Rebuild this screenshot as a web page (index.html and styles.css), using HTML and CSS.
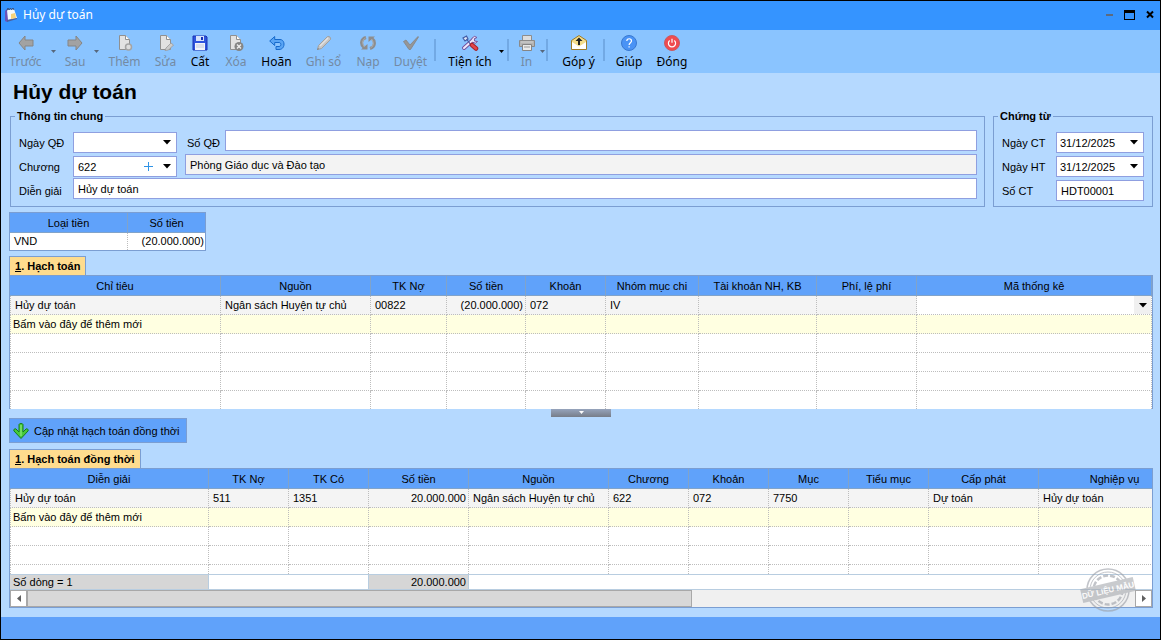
FILE: index.html
```html
<!DOCTYPE html>
<html lang="vi">
<head>
<meta charset="utf-8">
<meta name="viewport" content="width=device-width, initial-scale=1">
<title>Hủy dự toán</title>
<link rel="stylesheet" href="styles.css">
</head>
<body>
<div class="window">
  <header class="titlebar">
    <svg class="app-icon" width="14" height="16" viewBox="0 0 14 16" aria-hidden="true">
      <path d="M1 4l2-2 2 11-2 2-2-1z" fill="#6a52b8"/>
      <path d="M3 3l7-1 3 9-9 2z" fill="#f4f8fc"/>
      <path d="M7 7l4-1 1 5-5 1z" fill="#f5d27a"/>
      <path d="M3 13l10-2v1L3 15z" fill="#4a5f9e"/>
      <path d="M3 3.500l1-2.500 1 2 1.500-2 1 2 1.500-2 1 2" stroke="#37507d" fill="none"/>
    </svg>
    <span class="caption">Hủy dự toán</span>
    <button class="win-btn" aria-label="Thu nhỏ"><svg width="7" height="13" viewBox="0 0 7 13"><path d="M0 6h7v2H0z" fill="#5c6b80"/></svg></button>
    <button class="win-btn" aria-label="Phóng to"><svg width="11" height="11" viewBox="0 0 11 11"><path d="M0 1h11v10H0zM1 4v6h9V4z" fill="#000" fill-rule="evenodd"/></svg></button>
    <button class="win-btn" aria-label="Đóng cửa sổ"><svg width="8" height="11" viewBox="0 0 8 11"><path d="M1 2.500l6 6M7 2.500l-6 6" stroke="#000" stroke-width="2"/></svg></button>
  </header>

  <nav class="toolbar" aria-label="Thanh công cụ">
    <button class="tool" disabled>
      <svg width="16" height="16" viewBox="0 0 16 16"><path d="M1 8l6-7v4h8v6H7v4z" fill="#a2a2a2" stroke="#858585"/></svg>Trước</button>
    <button class="drop" disabled aria-label="Danh sách trước"><svg width="5" height="3" viewBox="0 0 5 3"><path d="M0 0h5L2.500 3z"/></svg></button>
    <button class="tool" disabled>
      <svg width="16" height="16" viewBox="0 0 16 16"><path d="M15 8L9 1v4H1v6h8v4z" fill="#a2a2a2" stroke="#858585"/></svg>Sau</button>
    <button class="drop" disabled aria-label="Danh sách sau"><svg width="5" height="3" viewBox="0 0 5 3"><path d="M0 0h5L2.500 3z"/></svg></button>
    <button class="tool" disabled>
      <svg width="16" height="16" viewBox="0 0 16 16"><path d="M2.500.5h6l4 4v10h-10z" fill="#e2e2e2" stroke="#909090"/><path d="M8.500.5v4h4" fill="#fff" stroke="#909090"/><circle cx="11.500" cy="12" r="3" fill="#dcdcdc" stroke="#a4a4a4" stroke-width="1.500"/></svg>Thêm</button>
    <button class="tool" disabled>
      <svg width="16" height="16" viewBox="0 0 16 16"><path d="M2.500.5h6l4 4v10h-10z" fill="#e2e2e2" stroke="#909090"/><path d="M8.500.5v4h4" fill="#fff" stroke="#909090"/><path d="M8 13l5-5 2.500 2-5 5L7 15.500z" fill="#ccc" stroke="#999" stroke-width=".8"/></svg>Sửa</button>
    <button class="tool">
      <svg width="16" height="16" viewBox="0 0 16 16"><path d="M1 1h13l1 1v13H1z" fill="#2f55dd" stroke="#1a33b4"/><path d="M4 1h8v5H4z" fill="#d6e2fb"/><path d="M9 2h2v3H9z" fill="#1a33b4"/><path d="M3 8h10v7H3z" fill="#f1f4fb"/><path d="M4 10h8M4 12h8" stroke="#c3cbdc"/></svg>Cất</button>
    <button class="tool" disabled>
      <svg width="16" height="16" viewBox="0 0 16 16"><path d="M2.500.5h6l4 4v10h-10z" fill="#e2e2e2" stroke="#909090"/><path d="M8.500.5v4h4" fill="#fff" stroke="#909090"/><circle cx="11" cy="11.500" r="4.500" fill="#858585"/><path d="M9 9.500l4 4M13 9.500l-4 4" stroke="#eee" stroke-width="1.400"/></svg>Xóa</button>
    <button class="tool">
      <svg width="16" height="16" viewBox="0 0 16 16"><path d="M.7 6l5-4.500v3H11c5.500 0 5.500 10-1 10H7v-3h3c2.500 0 2.500-4 0-4H5.700v3z" fill="#5aa5f4" stroke="#1669cb"/></svg>Hoãn</button>
    <button class="tool" disabled>
      <svg width="16" height="16" viewBox="0 0 16 16"><path d="M1.500 14.500l1-4 9-9c2-.5 3.500 1 3 3l-9 9z" fill="#c6c6c6" stroke="#a0a0a0"/><path d="M4 11l8-8" stroke="#e2e2e2" stroke-width="1.500"/><path d="M1 15l1-2 1 1z" fill="#777"/></svg>Ghi sổ</button>
    <button class="tool" disabled>
      <svg width="16" height="16" viewBox="0 0 16 16"><path d="M6 2.500C.5 4 .5 10 4 12.500M10 13.500c5.500-1.500 5.500-7.500 2-10" stroke="#8d8d8d" stroke-width="3" fill="none"/><path d="M1 14.500h6.500V9zM15 1.500H8.500V7z" fill="#8d8d8d"/><path d="M5.500 3C2 5 2 9 4.500 12M10.500 13c3.500-2 3.500-6 1-9" stroke="#b0b0b0" fill="none"/></svg>Nạp</button>
    <button class="tool" disabled>
      <svg width="16" height="16" viewBox="0 0 16 16"><path d="M.5 6.500L3 5l4 5 8-8.500.5.500-8 12.500H6z" fill="#969696" stroke="#848484" stroke-width=".8"/></svg>Duyệt</button>
    <span class="sep"></span>
    <button class="tool">
      <svg width="18" height="16" viewBox="0 0 18 16"><path d="M3 13L12 5" stroke="#72509e" stroke-width="4" stroke-linecap="round"/><path d="M16 2.500a3.200 3.200 0 1 0 .5 4L13.500 6l-.5-2z" fill="#ece6f8" stroke="#72509e"/><path d="M3 13L12 5" stroke="#efe8fb" stroke-width="2" stroke-linecap="round"/><path d="M2 3l3.500-2 1.500 3-3 2zM5.500 4L10 10" stroke="#425ba4" stroke-width="1.200" fill="#dfe6f8"/><path d="M11 10l4 3.500" stroke="#a81f28" stroke-width="4.500" stroke-linecap="round"/><path d="M11 10l4 3.500" stroke="#e2454a" stroke-width="2.500" stroke-linecap="round"/></svg>Tiện ích</button>
    <button class="drop" aria-label="Danh sách tiện ích"><svg width="5" height="3" viewBox="0 0 5 3"><path d="M0 0h5L2.500 3z"/></svg></button>
    <span class="sep"></span>
    <button class="tool" disabled>
      <svg width="18" height="16" viewBox="0 0 18 16"><path d="M4.500.5h9v6h-9z" fill="#ddd" stroke="#8d8d8d"/><path d="M1.500 5.500h15v6h-15z" fill="#b4b4b4" stroke="#8a8a8a"/><path d="M3 7h12" stroke="#d0d0d0"/><path d="M4.500 9.500h9v6h-9z" fill="#e9e9e9" stroke="#858585"/><path d="M6 12h6" stroke="#999"/></svg>In</button>
    <button class="drop" disabled aria-label="Danh sách in"><svg width="5" height="3" viewBox="0 0 5 3"><path d="M0 0h5L2.500 3z"/></svg></button>
    <span class="sep"></span>
    <button class="tool">
      <svg width="16" height="16" viewBox="0 0 16 16"><path d="M.5 5.500l7.500-5 7.500 5v9H.5z" fill="#f4dd8a" stroke="#a07c25"/><path d="M1 7l7 4.500L15 7v7H1z" fill="#fff"/><path d="M8 2.500L4.500 6H7v4h2V6h2.500z" fill="#222"/></svg>Góp ý</button>
    <span class="sep"></span>
    <button class="tool">
      <svg width="16" height="16" viewBox="0 0 16 16"><circle cx="8" cy="8" r="7.500" fill="#4a93f5" stroke="#3978d0"/><path d="M5.800 6c0-3 4.700-3 4.700 0 0 1.700-2.400 1.700-2.400 4M8.100 11.200v1.400" stroke="#fff" stroke-width="1.200" fill="none"/></svg>Giúp</button>
    <button class="tool">
      <svg width="16" height="16" viewBox="0 0 16 16"><circle cx="8" cy="8" r="7.500" fill="#ef4b50" stroke="#c9595f"/><path d="M5.700 5.500a3.600 3.600 0 1 0 4.600 0M8 3.800v4" stroke="#fff" stroke-width="1.200" fill="none"/></svg>Đóng</button>
  </nav>

  <main class="content">
    <h1>Hủy dự toán</h1>

    <form class="forms">
      <fieldset class="group general">
        <legend>Thông tin chung</legend>
        <div class="row">
          <label for="ngay-qd">Ngày QĐ</label>
          <span class="combo"><select id="ngay-qd"><option></option></select><svg class="caret" width="8" height="5" viewBox="0 0 8 5"><path d="M0 0h8L4 4.500z"/></svg></span>
          <label for="so-qd" class="second">Số QĐ</label>
          <input id="so-qd" type="text">
        </div>
        <div class="row">
          <label for="chuong">Chương</label>
          <span class="combo"><select id="chuong"><option>622</option></select><button type="button" class="add" aria-label="Thêm chương"><svg width="9" height="9" viewBox="0 0 9 9"><path d="M4 0h1v4h4v1H5v4H4V5H0V4h4z" fill="#2f93e6"/></svg></button><svg class="caret" width="8" height="5" viewBox="0 0 8 5"><path d="M0 0h8L4 4.500z"/></svg></span>
          <input class="name" type="text" readonly aria-label="Tên chương" value="Phòng Giáo dục và Đào tạo">
        </div>
        <div class="row">
          <label for="dien-giai">Diễn giải</label>
          <input id="dien-giai" type="text" value="Hủy dự toán">
        </div>
      </fieldset>

      <fieldset class="group voucher">
        <legend>Chứng từ</legend>
        <div class="row">
          <label for="ngay-ct">Ngày CT</label>
          <span class="combo"><select id="ngay-ct"><option>31/12/2025</option></select><svg class="caret" width="8" height="5" viewBox="0 0 8 5"><path d="M0 0h8L4 4.500z"/></svg></span>
        </div>
        <div class="row">
          <label for="ngay-ht">Ngày HT</label>
          <span class="combo"><select id="ngay-ht"><option>31/12/2025</option></select><svg class="caret" width="8" height="5" viewBox="0 0 8 5"><path d="M0 0h8L4 4.500z"/></svg></span>
        </div>
        <div class="row">
          <label for="so-ct">Số CT</label>
          <input id="so-ct" type="text" value="HDT00001">
        </div>
      </fieldset>
    </form>

    <table class="currency">
      <thead><tr><th>Loại tiền</th><th>Số tiền</th></tr></thead>
      <tbody><tr><td>VND</td><td class="num">(20.000.000)</td></tr></tbody>
    </table>

    <button class="tab"><span><u>1</u>. Hạch toán</span></button>
    <div class="sheet">
      <table class="ledger">
        <colgroup><col class="w211"><col class="w150"><col class="w76"><col class="w79"><col class="w80"><col class="w93"><col class="w118"><col class="w100"><col></colgroup>
        <thead><tr><th>Chỉ tiêu</th><th>Nguồn</th><th>TK Nợ</th><th>Số tiền</th><th>Khoản</th><th>Nhóm mục chi</th><th>Tài khoản NH, KB</th><th>Phí, lệ phí</th><th>Mã thống kê</th></tr></thead>
        <tbody>
          <tr class="filled"><td>Hủy dự toán</td><td>Ngân sách Huyện tự chủ</td><td>00822</td><td class="num">(20.000.000)</td><td>072</td><td>IV</td><td></td><td></td><td class="editing"><span class="combo"><select aria-label="Mã thống kê"><option></option></select><svg class="caret" width="8" height="5" viewBox="0 0 8 5"><path d="M0 0h8L4 4.500z"/></svg></span></td></tr>
          <tr class="new"><td>Bấm vào đây để thêm mới</td><td></td><td></td><td></td><td></td><td></td><td></td><td></td><td></td></tr>
          <tr><td></td><td></td><td></td><td></td><td></td><td></td><td></td><td></td><td></td></tr>
          <tr><td></td><td></td><td></td><td></td><td></td><td></td><td></td><td></td><td></td></tr>
          <tr><td></td><td></td><td></td><td></td><td></td><td></td><td></td><td></td><td></td></tr>
          <tr class="last"><td></td><td></td><td></td><td></td><td></td><td></td><td></td><td></td><td></td></tr>
        </tbody>
      </table>
    </div>
    <button class="splitter" aria-label="Thu gọn"><svg width="5" height="3" viewBox="0 0 5 3"><path d="M0 0h5L2.500 3z" fill="#fff"/></svg></button>

    <button class="update">
      <svg width="16" height="16" viewBox="0 0 16 16"><path d="M6 1.500c0-1.300 4-1.300 4 0V9l3-3c1-1 3 .8 2 2L8 15.500 1 8c-1-1.200 1-3 2-2l3 3z" fill="#47c93c" stroke="#15801a"/><path d="M8 2v11" stroke="#9af08a"/></svg>
      <span>Cập nhật hạch toán đồng thời</span>
    </button>

    <button class="tab"><span><u>1</u>. Hạch toán đồng thời</span></button>
    <div class="sheet">
      <table class="ledger wide">
        <colgroup><col class="w199"><col class="w80"><col class="w80"><col class="w100"><col class="w140"><col class="w80"><col class="w80"><col class="w80"><col class="w80"><col class="w110"><col></colgroup>
        <thead><tr><th>Diễn giải</th><th>TK Nợ</th><th>TK Có</th><th>Số tiền</th><th>Nguồn</th><th>Chương</th><th>Khoản</th><th>Mục</th><th>Tiểu mục</th><th>Cấp phát</th><th>Nghiệp vụ</th></tr></thead>
        <tbody>
          <tr class="filled"><td>Hủy dự toán</td><td>511</td><td>1351</td><td class="num">20.000.000</td><td>Ngân sách Huyện tự chủ</td><td>622</td><td>072</td><td>7750</td><td></td><td>Dự toán</td><td>Hủy dự toán</td></tr>
          <tr class="new"><td>Bấm vào đây để thêm mới</td><td></td><td></td><td></td><td></td><td></td><td></td><td></td><td></td><td></td><td></td></tr>
          <tr><td></td><td></td><td></td><td></td><td></td><td></td><td></td><td></td><td></td><td></td><td></td></tr>
          <tr><td></td><td></td><td></td><td></td><td></td><td></td><td></td><td></td><td></td><td></td><td></td></tr>
          <tr class="cut"><td></td><td></td><td></td><td></td><td></td><td></td><td></td><td></td><td></td><td></td><td></td></tr>
        </tbody>
        <tfoot><tr><td class="sum">Số dòng = 1</td><td colspan="2"></td><td class="sum num">20.000.000</td><td colspan="7"></td></tr></tfoot>
      </table>
      <div class="scrollbar">
        <button aria-label="Cuộn trái"><svg width="4" height="7" viewBox="0 0 4 7"><path d="M4 0v7L0 3.500z"/></svg></button>
        <div class="track"><div class="thumb"></div></div>
        <button aria-label="Cuộn phải"><svg width="4" height="7" viewBox="0 0 4 7"><path d="M0 0v7l4-3.500z"/></svg></button>
      </div>
    </div>
    <svg class="stamp" width="58" height="46" viewBox="0 0 58 46">
      <g fill="none" stroke="#9a9ea6">
        <circle cx="29" cy="23" r="21" stroke-width="1.500"/>
        <circle cx="29" cy="23" r="18" stroke-width="1"/>
        <circle cx="29" cy="23" r="14.500" stroke-width="2.500" stroke-dasharray="5 2"/>
      </g>
      <g transform="rotate(-13 29 23)">
        <path d="M2 16h54v14H2z" fill="#a6a9af"/>
        <text x="29" y="26" text-anchor="middle" font-size="8" font-weight="700" fill="#fff">DỮ LIỆU MẪU</text>
      </g>
    </svg>
  </main>
  <footer class="statusbar"></footer>
</div>
</body>
</html>
```

FILE: styles.css
```css
* { box-sizing: border-box; }

:root {
  --line: #7b9ed2;
  --field-line: #8f9fe0;
  --header: #60a2fa;
  --page: #b5d9ff;
  --dots: #bdbdbd;
}

body {
  margin: 0;
  font: 11px/14px "Liberation Sans", Arial, sans-serif;
  color: #000;
}

button, input, select { font: inherit; color: inherit; margin: 0; }
button { padding: 0; border: 0; background: none; }
svg { display: block; flex: none; }

.window {
  display: flex;
  flex-direction: column;
  min-height: 100vh;
  border: 1px solid #000;
  background: var(--page);
}

/* Title bar */
.titlebar {
  display: flex;
  align-items: center;
  gap: 11px;
  height: 29px;
  padding: 0 6px 2px 3px;
  background: #3594ff;
}
.caption {
  flex: 1;
  margin-left: -6px;
  color: #fff;
  font: 12px/16px "Noto Sans", "Open Sans", sans-serif;
}

/* Toolbar */
.toolbar {
  display: grid;
  grid-template-columns:
    47px 8px 36px 7px 49px 33px 36px 36px 45px 49px 40px 45px
    10px 54px 9px 7px 27px 5px 10px 47px 5px 44px 42px;
  height: 43px;
  padding-left: 1px;
  background: #8ac4ff;
}
.tool {
  display: flex;
  flex-direction: column;
  align-items: center;
  gap: 3px;
  padding-top: 5px;
  white-space: nowrap;
  font: 12px/16px "Noto Sans", "Open Sans", sans-serif;
}
.tool:disabled { color: #748aa3; }
.drop {
  display: flex;
  justify-content: center;
  padding-top: 20px;
}
.drop:disabled { fill: #56677c; }
.sep {
  width: 2px;
  height: 22px;
  margin: 9px 1px 0;
  background: #72a9e4;
}

/* Content */
.content {
  position: relative;
  display: flex;
  flex-direction: column;
  padding: 0 7px 9px 8px;
}
h1 {
  margin: 0;
  padding: 7px 4px 5px;
  font-size: 21px;
  line-height: 24px;
}
.forms {
  display: flex;
  gap: 8px;
  margin-bottom: 5px;
}
.group {
  min-width: 0;
  margin: 0;
  padding: 7px 7px 4px 8px;
  border: 1px solid var(--line);
}
.general { flex: 1; margin-left: 1px; }
.voucher { flex: 0 0 160px; padding-right: 8px; }
legend {
  margin-left: -4px;
  padding: 0 2px;
  font-weight: 700;
}
.row {
  display: flex;
  align-items: flex-start;
  height: 24px;
}
.row label {
  flex: 0 0 54px;
  padding-top: 6px;
  white-space: nowrap;
}
.row .second { flex-basis: 40px; padding-left: 2px; }
.row input {
  flex: 1;
  min-width: 0;
  height: 21px;
  padding: 0 4px;
  border: 1px solid var(--field-line);
  background: #fff;
}
.row input.name { background: #f3f3f3; }
.combo {
  display: grid;
  grid-template-columns: 1fr 20px 18px;
  align-items: center;
  height: 21px;
  border: 1px solid var(--field-line);
  background: #fff;
}
.general .combo { flex: 0 0 104px; margin: 2px 8px 0 0; }
.combo select {
  grid-area: 1 / 1 / 2 / 4;
  width: 100%;
  height: 100%;
  padding: 0 4px;
  border: 0;
  appearance: none;
  background: none;
}
.add { grid-area: 1 / 2; justify-self: center; }
.caret { grid-area: 1 / 3; justify-self: center; pointer-events: none; }
.voucher .row { padding-top: 2px; }
.voucher label { padding-top: 4px; }
.voucher .combo { flex: 1; }
.voucher .combo select { padding: 0 3px; }

/* Tables */
table {
  border-spacing: 0;
  table-layout: fixed;
}
th {
  height: 20px;
  padding: 1px 0 0;
  border-right: 1px solid #81a3c9;
  border-bottom: 1px solid #81a3c9;
  background: var(--header);
  font-weight: 400;
  line-height: 18px;
  white-space: nowrap;
}
td {
  height: 19px;
  padding: 0 4px;
  border-right: 1px dotted var(--dots);
  border-bottom: 1px dotted var(--dots);
  background: #fff;
  line-height: 18px;
  white-space: nowrap;
}
.num { padding-right: 2px; text-align: right; }

.currency {
  width: 197px;
  margin-bottom: 5px;
  border: 1px solid var(--line);
}
.currency th:first-child { width: 118px; }
.currency td { height: 17px; border-bottom: 0; line-height: 17px; }
.currency td.num { padding-right: 1px; }
.currency th:last-child, .currency td:last-child { border-right: 0; }

.tab {
  align-self: flex-start;
  height: 19px;
  padding: 0 5px;
  border: 1px solid var(--line);
  border-bottom: 0;
  background: #ffdc8e;
  font-weight: 700;
  line-height: 18px;
}
.tab span { display: block; }
.sheet {
  overflow: hidden;
  border: 1px solid var(--line);
  border-bottom: 0;
}
.ledger { width: 100%; }
.ledger.wide { width: calc(100% + 39px); }
.ledger td:first-child { border-left: 1px dotted var(--dots); }
.ledger .new td { background: #ffffe1; }
.ledger .new td:first-child { padding-left: 2px; }
.ledger .filled td { background: #f4f4f4; }
.ledger .last td { height: 18px; border-bottom: 0; }
.ledger .cut td { height: 9px; border-bottom: 0; line-height: 9px; }
.ledger .filled .editing { padding: 0; background: #fff; }
.editing .combo {
  grid-template-columns: 1fr 0 17px;
  height: 18px;
  border: 0;
  background: linear-gradient(#f0f0f0, #f0f0f0) right / 17px 100% no-repeat;
}
.ledger tfoot td,
.ledger tfoot td:first-child {
  height: 16px;
  padding-left: 3px;
  border: solid #b8cde0;
  border-width: 1px 1px 1px 0;
  line-height: 14px;
}
.ledger tfoot .sum { background: #d6d6d6; }

.w76 { width: 76px; }
.w79 { width: 79px; }
.w80 { width: 80px; }
.w93 { width: 93px; }
.w100 { width: 100px; }
.w110 { width: 110px; }
.w118 { width: 118px; }
.w140 { width: 140px; }
.w150 { width: 150px; }
.w199 { width: 199px; }
.w211 { width: 211px; }

.splitter {
  display: flex;
  align-self: center;
  justify-content: center;
  width: 60px;
  height: 8px;
  margin-bottom: 1px;
  padding-top: 2px;
  background: linear-gradient(#96a4bc, #777d88);
}

.update {
  display: flex;
  align-items: center;
  align-self: flex-start;
  gap: 5px;
  height: 25px;
  margin-bottom: 6px;
  padding: 0 7px 0 3px;
  border: 1px solid var(--line);
  background: var(--header);
}

.scrollbar {
  display: flex;
  height: 18px;
  border-bottom: 1px solid var(--line);
  background: #f0f0f0;
}
.scrollbar button {
  display: flex;
  align-items: center;
  justify-content: center;
  width: 17px;
  border: 1px solid #a8a8a8;
  background: #fff;
  fill: #606060;
}
.track { flex: 1; }
.thumb {
  width: 60%;
  height: 17px;
  border: 1px solid #a8a8a8;
  background: #d8d8d8;
}

/* Sample-data stamp laid over the bottom right corner of the grid */
.stamp {
  position: absolute;
  right: 23px;
  bottom: 4px;
  opacity: .6;
}

.statusbar {
  height: 22px;
  margin-top: auto;
  background: var(--header);
}
```
